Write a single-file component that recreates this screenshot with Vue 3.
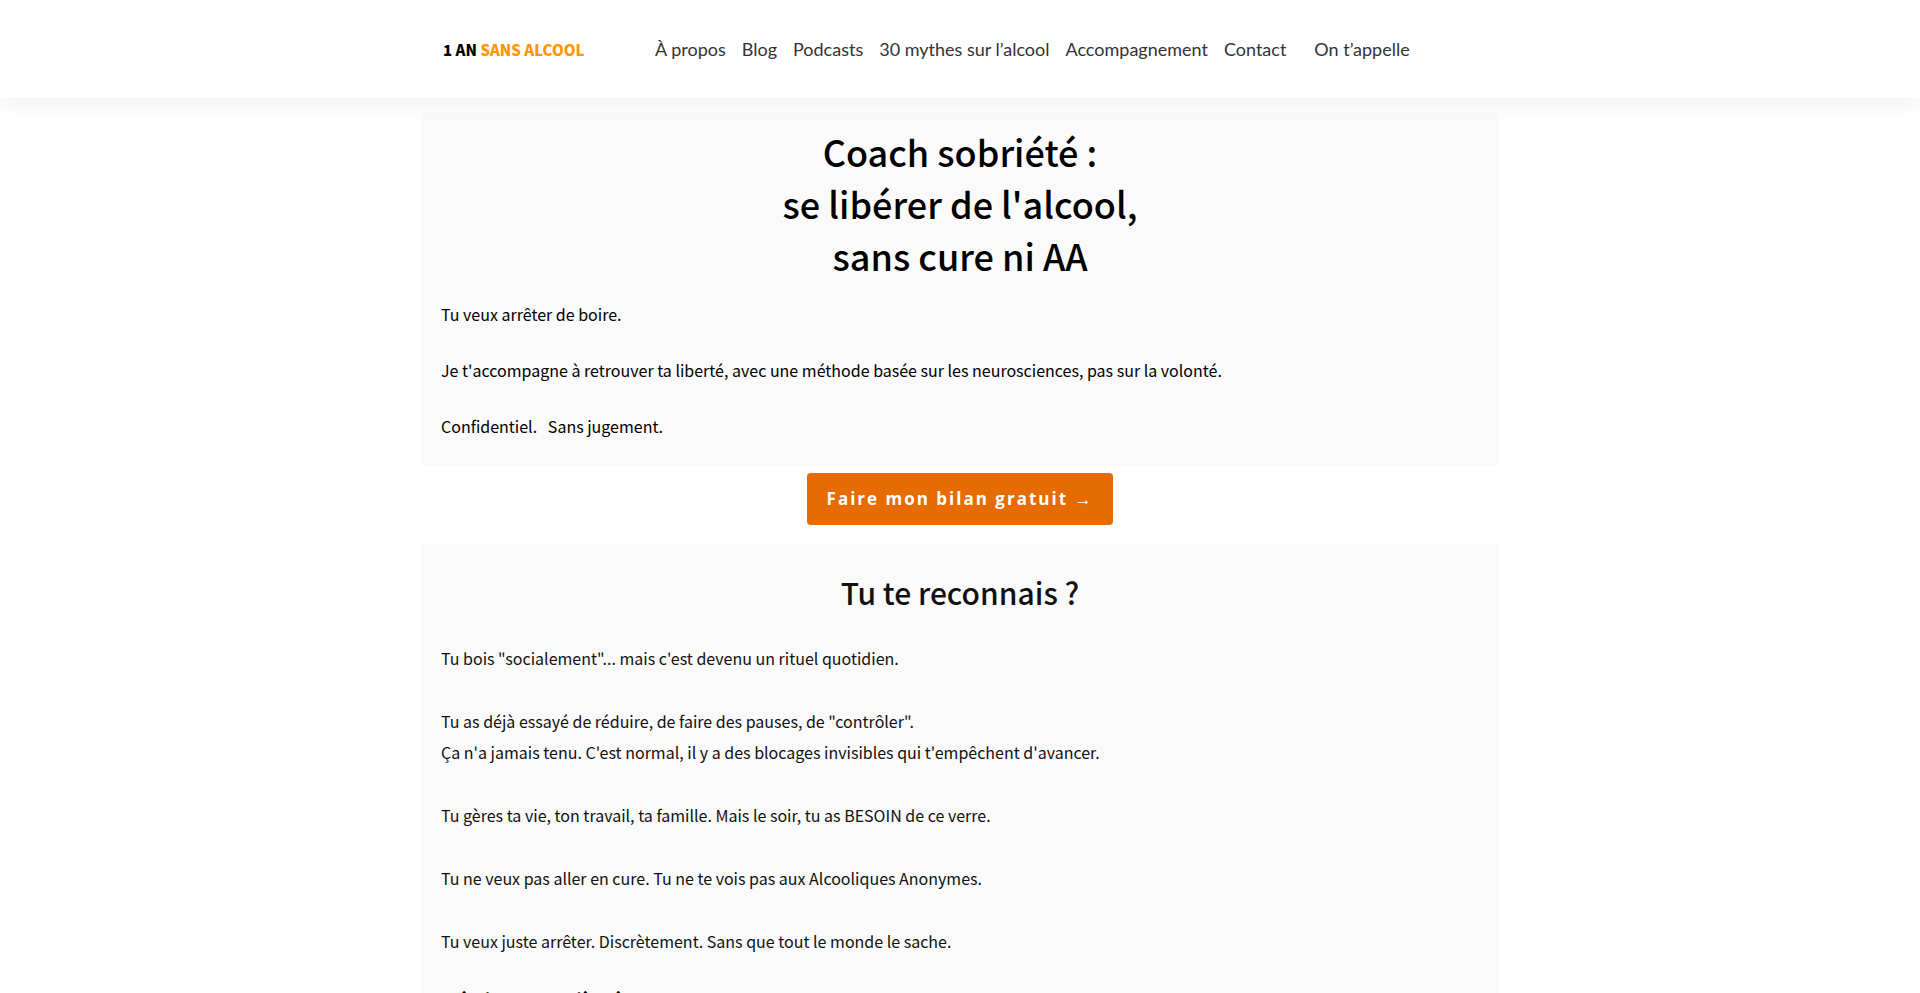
<script setup>
const links = ['À propos', 'Blog', 'Podcasts', '30 mythes sur l’alcool', 'Accompagnement', 'Contact']
</script>

<template>
  <div class="page">
    <header class="header">
      <div class="bar">
        <a class="logo" href="#">1 AN <span>SANS ALCOOL</span></a>
        <nav class="nav">
          <a v-for="link in links" :key="link" href="#">{{ link }}</a>
          <a class="call" href="#">On t’appelle</a>
        </nav>
      </div>
    </header>
    <main class="main">
      <section class="card hero">
        <h1>Coach sobriété :<br />se libérer de l'alcool,<br />sans cure ni AA</h1>
        <p>Tu veux arrêter de boire.</p>
        <p>Je t'accompagne à retrouver ta liberté, avec une méthode basée sur les neurosciences, pas sur la volonté.</p>
        <p>Confidentiel. &nbsp; Sans jugement.</p>
      </section>
      <a class="cta" href="#">Faire mon bilan gratuit <span>→</span></a>
      <section class="card story">
        <h2>Tu te reconnais ?</h2>
        <p>Tu bois "socialement"... mais c'est devenu un rituel quotidien.</p>
        <p>Tu as déjà essayé de réduire, de faire des pauses, de "contrôler".<br />Ça n'a jamais tenu. C'est normal, il y a des blocages invisibles qui t'empêchent d'avancer.</p>
        <p>Tu gères ta vie, ton travail, ta famille. Mais le soir, tu as BESOIN de ce verre.</p>
        <p>Tu ne veux pas aller en cure. Tu ne te vois pas aux Alcooliques Anonymes.</p>
        <p>Tu veux juste arrêter. Discrètement. Sans que tout le monde le sache.</p>
        <h3>J'étais en première à</h3>
      </section>
    </main>
  </div>
</template>

<style>
body {
  margin: 0;
  background: #fff;
}
</style>

<style scoped>
.page {
  height: 100vh;
  overflow: hidden;
  font-family: "Noto Sans CJK SC", "Noto Sans", sans-serif;
  color: #000;
}
a {
  color: inherit;
  text-decoration: none;
}
.header {
  position: relative;
  background: #fff;
  box-shadow: 0 8px 20px rgba(0, 0, 0, 0.05);
}
.bar {
  display: flex;
  align-items: center;
  box-sizing: border-box;
  max-width: 1080px;
  min-height: 98px;
  margin: 0 auto;
  padding: 0 23px;
}
.logo {
  width: 212px;
  font-size: 15px;
  font-weight: 900;
  white-space: nowrap;
}
.logo span {
  color: #ff9500;
}
.nav {
  display: flex;
  gap: 16px;
  font-family: Lato, sans-serif;
  font-size: 18px;
  line-height: 24px;
  color: #333;
  white-space: nowrap;
}
.call {
  margin-left: 12px;
}
.main {
  display: flex;
  flex-direction: column;
  max-width: 1078px;
  margin: 15px auto 0;
}
.card {
  padding: 0 20px;
  background: #fafafa;
}
h1,
h2,
h3 {
  margin: 0;
  font-weight: 500;
}
h1 {
  padding: 12px 0 5px;
  font-size: 36px;
  line-height: 52px;
  text-align: center;
}
h2 {
  padding: 24px 0 27px;
  font-size: 30px;
  line-height: 48px;
  color: #111;
  text-align: center;
}
p {
  margin: 0;
  font-size: 16px;
}
.hero p {
  padding: 14px 0;
  line-height: 28px;
}
.hero {
  padding-bottom: 12px;
}
.cta {
  align-self: center;
  margin: 7px 0 19px;
  padding: 14px 20px;
  border-radius: 4px;
  background: #e66b00;
  color: #fff;
  font-family: "Open Sans", sans-serif;
  font-size: 17px;
  font-weight: 700;
  line-height: 24px;
  letter-spacing: 2px;
}
.cta span {
  font-weight: 400;
}
.story p {
  margin-bottom: 32px;
  line-height: 31px;
  color: #111;
}
h3 {
  font-size: 18px;
  font-weight: 700;
  line-height: 20px;
}
</style>
